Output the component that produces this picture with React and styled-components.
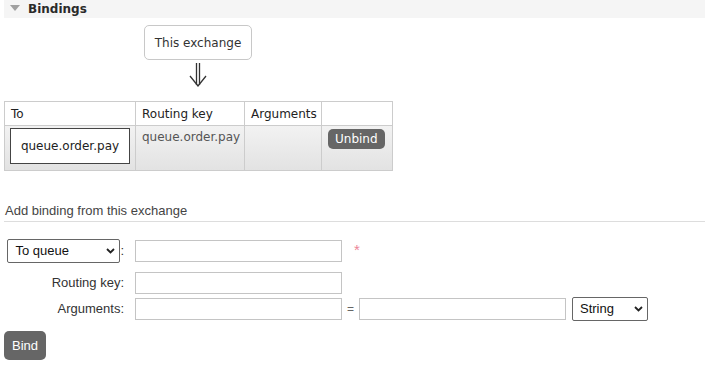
import styled, {createGlobalStyle} from 'styled-components';

const GlobalStyle = createGlobalStyle`
  body {
    margin: 0;
    background: #fff;
    font-family: "DejaVu Sans", Verdana, sans-serif;
    font-size: 12px;
    color: #333;
  }
`;

const Page = styled.div`
  padding: 0 0 0 4px;
  width: 701px;
`;

const SectionBar = styled.div`
  height: 18px;
  display: flex;
  align-items: center;
  gap: 8px;
  padding-left: 6px;
  background: #f5f5f5;
  font-weight: bold;
  color: #2a2a2a;
  font-size: 12px;
`;

const Triangle = styled.span`
  width: 0;
  height: 0;
  border-left: 5px solid transparent;
  border-right: 5px solid transparent;
  border-top: 6px solid #a0a0a0;
  margin-top: -2px;
`;

const Diagram = styled.div`
  width: 388px;
  display: flex;
  flex-direction: column;
  align-items: center;
  padding-top: 7px;
`;

const ExchangeBox = styled.div`
  height: 33px;
  padding: 0 10px;
  display: flex;
  align-items: center;
  border: 1px solid #c8c8c8;
  border-radius: 5px;
  color: #333;
`;

const Arrow = styled.svg`
  display: block;
  margin: 3px 0 14px;
`;

const BindTable = styled.table`
  border-collapse: collapse;
  width: 388px;
  table-layout: fixed;
`;

const HeadCell = styled.th`
  box-sizing: border-box;
  border: 1px solid #ccc;
  height: 24px;
  padding: 0 6px;
  text-align: left;
  font-weight: normal;
  color: #222;
  width: ${p => p.$w}px;
  background: #fff;
`;

const BodyRow = styled.tr`
  background: linear-gradient(#f2f2f2, #e2e2e2);
`;

const BodyCell = styled.td`
  box-sizing: border-box;
  border: 1px solid #ccc;
  height: 45px;
  padding: ${p => (p.$box ? '2px 5px 5px 5px' : '2px 6px')};
  vertical-align: top;
  color: #555;
`;

const QueueBox = styled.div`
  height: 34px;
  border: 1px solid #444;
  background: #fff;
  display: flex;
  align-items: center;
  justify-content: center;
  color: #222;
`;

const KeyText = styled.div`
  padding-top: 2px;
`;

const DarkButton = styled.button`
  border: none;
  background: #666;
  color: #fff;
  border-radius: 5px;
  cursor: pointer;
  font-family: ${p => (p.$small ? '"DejaVu Sans", Verdana, sans-serif' : '"Liberation Sans", Arial, sans-serif')};
  font-size: ${p => (p.$small ? 12 : 13)}px;
  height: ${p => (p.$small ? 20 : 29)}px;
  padding: ${p => (p.$small ? '0 7px' : '0 8px')};
  margin-top: ${p => (p.$small ? 1 : 0)}px;
`;

const SubTitle = styled.div`
  margin-top: 32px;
  padding: 0 1px 3px;
  border-bottom: 1px solid #ddd;
  font-family: "Liberation Sans", Arial, sans-serif;
  font-size: 13px;
  color: #444;
`;

const Form = styled.div`
  font-family: "Liberation Sans", Arial, sans-serif;
  font-size: 13px;
  color: #333;
  padding-top: 17px;
`;

const FormRow = styled.div`
  display: flex;
  align-items: center;
  margin-top: ${p => p.$mt || 0}px;
  height: 23px;
`;

const FieldLabel = styled.div`
  width: 120px;
  margin-right: 11px;
  display: flex;
  justify-content: flex-end;
  align-items: center;
`;

const TextInput = styled.input`
  box-sizing: border-box;
  width: 207px;
  height: 22px;
  border: 1px solid #c4c4c4;
  border-radius: 0;
  padding: 0 4px;
  font: inherit;
  outline: none;
`;

const SelectWrap = styled.div`
  position: relative;
  display: inline-block;
`;

const Select = styled.select`
  appearance: none;
  box-sizing: border-box;
  width: ${p => p.$w}px;
  height: 24px;
  border: 1px solid #666;
  border-radius: 2px;
  background: #fff;
  font: inherit;
  color: #111;
  padding: 0 4px 0 7px;
  outline: none;
`;

const Chevron = styled.svg`
  position: absolute;
  right: 5px;
  top: 9px;
  pointer-events: none;
`;

const Required = styled.span`
  color: #ec8597;
  margin-left: 12px;
  font-size: 15px;
  margin-top: -2px;
`;

const Equals = styled.span`
  width: 17px;
  text-align: center;
  color: #666;
  font-size: 12px;
`;

const Gap = styled.span`
  width: 6px;
`;

const Footer = styled.div`
  margin-top: 11px;
`;

const DropSelect = ({w, value, options}) => (
  <SelectWrap>
    <Select $w={w} defaultValue={value}>
      {options.map(o => (
        <option key={o}>{o}</option>
      ))}
    </Select>
    <Chevron width="9" height="6" viewBox="0 0 9 6">
      <path d="M1 1 L4.5 4.5 L8 1" fill="none" stroke="#222" strokeWidth="1.8" />
    </Chevron>
  </SelectWrap>
);

const App = () => (
  <Page>
    <GlobalStyle />
    <SectionBar>
      <Triangle />
      Bindings
    </SectionBar>
    <Diagram>
      <ExchangeBox>This exchange</ExchangeBox>
      <Arrow width="18" height="24" viewBox="0 0 18 24">
        <path d="M7.5 0 V22 M10.5 0 V22" stroke="#333" strokeWidth="1.3" fill="none" />
        <path d="M1 13 L9 23 L17 13" stroke="#333" strokeWidth="1.3" fill="none" />
      </Arrow>
    </Diagram>
    <BindTable>
      <thead>
        <tr>
          <HeadCell $w={131}>To</HeadCell>
          <HeadCell $w={109}>Routing key</HeadCell>
          <HeadCell $w={77}>Arguments</HeadCell>
          <HeadCell $w={71}></HeadCell>
        </tr>
      </thead>
      <tbody>
        <BodyRow>
          <BodyCell $box>
            <QueueBox>queue.order.pay</QueueBox>
          </BodyCell>
          <BodyCell>
            <KeyText>queue.order.pay</KeyText>
          </BodyCell>
          <BodyCell></BodyCell>
          <BodyCell>
            <DarkButton $small>Unbind</DarkButton>
          </BodyCell>
        </BodyRow>
      </tbody>
    </BindTable>
    <SubTitle>Add binding from this exchange</SubTitle>
    <Form>
      <FormRow>
        <FieldLabel>
          <DropSelect w={113} value="To queue" options={['To exchange', 'To queue']} />
          :
        </FieldLabel>
        <TextInput />
        <Required>*</Required>
      </FormRow>
      <FormRow $mt={9}>
        <FieldLabel>Routing key:</FieldLabel>
        <TextInput />
      </FormRow>
      <FormRow $mt={3}>
        <FieldLabel>Arguments:</FieldLabel>
        <TextInput />
        <Equals>=</Equals>
        <TextInput />
        <Gap />
        <DropSelect w={76} value="String" options={['String', 'Number', 'Boolean', 'List']} />
      </FormRow>
      <Footer>
        <DarkButton>Bind</DarkButton>
      </Footer>
    </Form>
  </Page>
);

export default App;
